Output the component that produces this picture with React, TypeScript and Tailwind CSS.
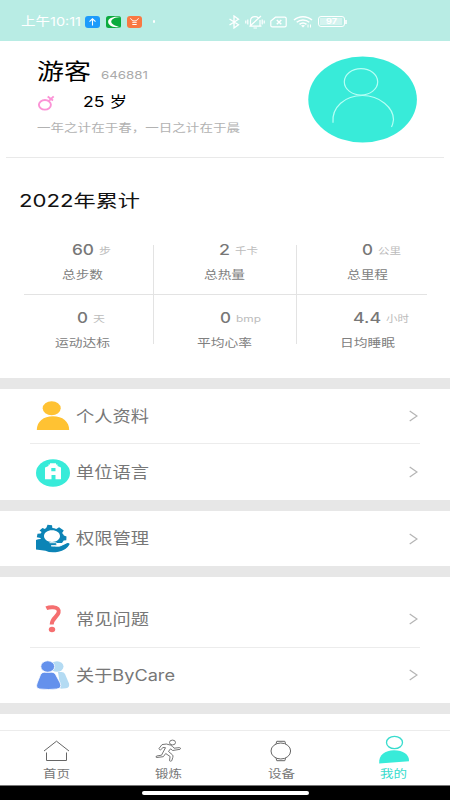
import { useLayoutEffect, useRef, useState, type ReactNode } from "react";

/* Text stretched horizontally to the width of its box. */
function Fit({ className, children }: { className: string; children: string }) {
  const box = useRef<HTMLSpanElement>(null);
  const inner = useRef<HTMLSpanElement>(null);
  const [scale, setScale] = useState(1);
  useLayoutEffect(() => {
    if (box.current && inner.current && inner.current.offsetWidth) {
      const natural = inner.current.getBoundingClientRect().width / scale;
      setScale(box.current.getBoundingClientRect().width / natural);
    }
    // eslint-disable-next-line
  }, [children]);
  return (
    <span ref={box} className={`block shrink-0 whitespace-nowrap leading-none ${className}`}>
      <span ref={inner} className="inline-block origin-left" style={{ transform: `scaleX(${scale})` }}>
        {children}
      </span>
    </span>
  );
}

function StatusBar() {
  return (
    <header className="flex h-[41px] shrink-0 items-center bg-[#b8ece4] pl-[21px] pt-[2px] text-white">
      <Fit className="w-[60px] text-[12px]">上午10:11</Fit>
      <svg className="ml-[3.5px] h-3 w-[15px]" viewBox="0 0 15 12">
        <rect width="15" height="12" rx="3" fill="#1d9bfb" />
        <path d="M7.5 9.5V3M4.5 5.6 7.5 2.8l3 2.8" fill="none" stroke="#fff" strokeWidth="1.1" />
      </svg>
      <svg className="ml-[6px] h-3 w-[15px]" viewBox="0 0 15 12">
        <rect width="15" height="12" rx="2.5" fill="#0cab3e" />
        <path d="M14.500 1C6-.3 1.500 3 2.200 6.400 3 10 8 11.700 14.500 11.200 8 9.700 4.800 7.700 5.300 5.200 6 2.800 9 1.300 14.500 1Z" fill="#fff" />
      </svg>
      <svg className="ml-[6px] h-3 w-[15px]" viewBox="0 0 15 12">
        <rect width="15" height="12" rx="3" fill="#f97842" />
        <path d="M3.500 2.300C5 5.700 10 5.700 11.500 2.300M5.300 6.300h4.400M5.300 8.500h4.400" fill="none" stroke="#fff" strokeWidth="1" />
      </svg>
      <span className="ml-[11px] size-[2.5px] rounded-full bg-white" />
      <svg className="ml-[72.500px] h-[14px] w-[12px]" viewBox="0 0 12 14" fill="none" stroke="#fff" strokeWidth="1.3">
        <path d="M1.500 4 10.500 9.800 6 13V1l4.500 3.200L1.500 10" />
      </svg>
      <svg className="ml-[5px] h-[14px] w-[20px]" viewBox="0 0 20 14" fill="none" stroke="#fff" strokeWidth="1.2">
        <path d="M4.500 11.100h12M5.500 10.500V6c0-2.700 1.800-4.300 4.500-4.300 1.500 0 2.600.4 3.300 1.200M15 5v5.500M8.500 13h3.500M16 1 4.500 11.500M2.800 4.500v5M.8 5.500v3M17.200 4.500v5M19.200 5.500v3" />
      </svg>
      <svg className="ml-[5.500px] h-[12px] w-[17px]" viewBox="0 0 17 12" fill="none" stroke="#fff" strokeWidth="1.200">
        <path d="M5.500 1.200h9.300q1.400 0 1.400 1.400v6.800q0 1.400-1.400 1.400H2.200Q.8 10.800.8 9.400V5Z" />
        <path d="m6.800 4 4.500 4.200M11.300 4 6.800 8.200" strokeWidth="1.500" />
      </svg>
      <svg className="ml-[5.500px] h-[13px] w-[20px]" viewBox="0 0 20 13" fill="none" stroke="#fff" strokeWidth="1.500">
        <path d="M1 5C6 .5 14 .5 19 5M3.700 7.300c3.500-3.100 9-3.100 12.600 0M6.500 9.400c2-1.700 5-1.700 7 0" />
        <path d="m10 12.500-2-2q2-1 4 0Z" fill="#fff" stroke="none" />
        <path d="M15 9.500v3m2.500-3v3" strokeWidth="1" />
      </svg>
      <div className="ml-[5px] flex h-[11px] w-[27px] items-center justify-center rounded-[3px] border border-white">
        <div className="flex h-[7px] w-[22px] items-center justify-center bg-white/40">
          <Fit className="w-[11px] text-[7px] font-bold">97</Fit>
        </div>
      </div>
      <span className="h-[4px] w-[2px] bg-white/80" />
    </header>
  );
}

function Profile() {
  return (
    <section className="flex h-[116px] shrink-0 pl-[37px]">
      <div className="w-[271px] pt-[19px]">
        <div className="flex items-end">
          <Fit className="w-[54px] text-[22px] text-black">游客</Fit>
          <Fit className="mb-[1px] ml-[10px] w-[47px] text-[11px] text-[#aaa]">646881</Fit>
        </div>
        <div className="mt-[12px] flex items-center">
          <svg className="h-[17px] w-[18px]" viewBox="0 0 18 17" fill="none" stroke="#fb93d6">
            <ellipse cx="7.900" cy="10.800" rx="6" ry="4.800" strokeWidth="1.900" />
            <path d="M11.500 7.200 16.700 2.400M10.700 2.600l5.300 4" strokeWidth="1.900" />
          </svg>
          <Fit className="ml-[28px] w-[44px] text-[14.5px] text-black">25 岁</Fit>
        </div>
        <Fit className="mt-[11.500px] w-[203px] text-[11px] text-[#b2b2b2]">一年之计在于春，一日之计在于晨</Fit>
      </div>
      <svg className="mt-[15px] h-[87px] w-[109px]" viewBox="0 0 109 87" fill="none">
        <ellipse cx="54.600" cy="43.500" rx="54.300" ry="43" fill="#38ebd9" />
        <g stroke="#b5fff5" strokeWidth="1.200">
          <ellipse cx="53" cy="25.800" rx="16.700" ry="13.200" />
          <path d="M25 66.700C23.500 51 37 39.500 54.500 39.500S85.500 52 85.500 63.500Q85 68 83.500 71" />
        </g>
      </svg>
    </section>
  );
}

function Stat({ shift, value, label }: { shift: string; value: ReactNode; label: ReactNode }) {
  return (
    <div className="flex flex-col items-center">
      <div className={`flex h-[11px] items-center gap-[5px] text-[#bcbcbc] ${shift}`}>{value}</div>
      <div className="mt-[14px] text-[11.5px] text-[#808080]">{label}</div>
    </div>
  );
}

const Num = ({ w, children }: { w: string; children: string }) => (
  <Fit className={`text-[14.5px] font-medium text-[#777] ${w}`}>{children}</Fit>
);
const Unit = ({ w, children }: { w: string; children: string }) => (
  <Fit className={`text-[9px] ${w}`}>{children}</Fit>
);

function Totals() {
  return (
    <section className="flex h-[220px] shrink-0 flex-col pt-[34px]">
      <Fit className="ml-[19px] w-[121px] text-[17.5px] text-[#111]">2022年累计</Fit>
      <div className="ml-[12px] mt-[35.5px] w-[427px]">
        <div className="grid h-[49px] grid-cols-3 divide-x divide-[#e3e3e3]">
          <Stat shift="pl-[17px]" value={<><Num w="w-[22px]">60</Num><Unit w="w-[12px]">步</Unit></>} label={<Fit className="w-[41px]">总步数</Fit>} />
          <Stat shift="pl-[28px]" value={<><Num w="w-[11px]">2</Num><Unit w="w-[23px]">千卡</Unit></>} label={<Fit className="w-[41px]">总热量</Fit>} />
          <Stat shift="pl-[28px]" value={<><Num w="w-[11px]">0</Num><Unit w="w-[23px]">公里</Unit></>} label={<Fit className="w-[41px]">总里程</Fit>} />
        </div>
        <div className="mx-[12px] h-px bg-[#e3e3e3]" />
        <div className="grid h-[49px] grid-cols-3 grid-rows-[49px] divide-x divide-[#e3e3e3]">
          <div className="pt-[18px]">
            <Stat shift="pl-[17px]" value={<><Num w="w-[11px]">0</Num><Unit w="w-[12px]">天</Unit></>} label={<Fit className="w-[55px]">运动达标</Fit>} />
          </div>
          <div className="pt-[18px]">
            <Stat shift="pl-[31px]" value={<><Num w="w-[11px]">0</Num><Unit w="w-[25px]">bmp</Unit></>} label={<Fit className="w-[55px]">平均心率</Fit>} />
          </div>
          <div className="pt-[18px]">
            <Stat shift="pl-[26px]" value={<><Num w="w-[28px]">4.4</Num><Unit w="w-[23px]">小时</Unit></>} label={<Fit className="w-[55px]">日均睡眠</Fit>} />
          </div>
        </div>
      </div>
    </section>
  );
}

function Row({ icon, label, className }: { icon: ReactNode; label: ReactNode; className: string }) {
  return (
    <div className={`flex shrink-0 items-center pl-[36px] pr-[32px] ${className}`}>
      {icon}
      <div className="ml-[6px] flex-1 pt-px text-[15.5px] text-[#777]">{label}</div>
      <svg className="h-[12px] w-[9px]" viewBox="0 0 9 12" fill="none" stroke="#b5b5b5" strokeWidth="1.300">
        <path d="m.7 1 7.300 5-7.300 5" />
      </svg>
    </div>
  );
}

const Divider = () => <div className="ml-[30px] mr-[30px] h-px shrink-0 bg-[#ececec]" />;

const PersonIcon = () => (
  <svg className="h-[30px] w-[34px]" viewBox="0 0 34 30" fill="#ffc233">
    <ellipse cx="15.700" cy="7.200" rx="9" ry="7" />
    <path d="M.8 29C.8 20.500 7.500 15.300 17 15.300S33.200 20.500 33.200 29Z" />
  </svg>
);
const UnitIcon = () => (
  <svg className="h-[30px] w-[34px]" viewBox="0 0 34 30">
    <ellipse cx="17" cy="16" rx="17" ry="13.700" fill="#38ebd9" />
    <path fillRule="evenodd" d="M9 22.300V10.500l3.500-1.500V7.500H14V6.300h6v1.200h1.500V9l3.500 1.500v11.800h-5.500v-4.300h-4v4.300ZM15.300 11v3.300h4.200V11Z" fill="#fff" />
  </svg>
);
const GearHandIcon = () => (
  <svg className="h-[30px] w-[34px]" viewBox="0 0 34 30" fill="#0c84b6">
    <path fillRule="evenodd" d="M10.500 3.500 11.500.800l4.500.5.400 2.700q2 .2 3.800 1l2.900-1.700 4.700 3.200-1.700 2.500q1.300 1.200 1.800 2.600l2.600.8-.2 3.800-2.600.2-1.700 2.600H6L4.500 14l-3.700-.7.700-3.600 3.200-.1.900-1.600L3.500 6.500 6.500 4l2.400 1ZM16 6.200c-4.600 0-8 2.600-8 5.900s3.400 5.900 8 5.900 8-2.600 8-5.900-3.400-5.900-8-5.900Z" />
    <path d="M0 16q5-2 9 .5l4.500 2.200h5q2.500 0 2.500 1.500T18 22l5.500.2 8-3.200q2.500-.3 2 1.500-3.500 6-11 7.300-8 1.500-13-1L0 25.500Z" />
    <path d="M13.500 18.700h6q2.200.3 1.700 1.900-1 1.200-6 1.200 7 1 9.500-.1l5-2.500" fill="none" stroke="#fff" strokeWidth=".9" />
  </svg>
);
const QuestionIcon = () => (
  <svg className="h-[30px] w-[34px]" viewBox="0 0 34 30" fill="none">
    <path d="M10.300 4.300Q13 3 17 3.200C21.500 3.400 23.300 5.500 22.600 8.500 21.800 12.500 16 14 15.700 20.500" stroke="#f56f70" strokeWidth="4" />
    <ellipse cx="16" cy="25.500" rx="3.200" ry="2.700" fill="#f56f70" />
  </svg>
);
const PeopleIcon = () => (
  <svg className="h-[30px] w-[34px]" viewBox="0 0 34 30">
    <g fill="#b4dbf3">
      <ellipse cx="21" cy="6.500" rx="6.500" ry="5.200" />
      <path d="M22 12h3.500q2.500 0 3.500 2l4 9.500q1 4-3 4.800l-5.500.4Z" />
    </g>
    <g fill="#6491ec" stroke="#fff" strokeWidth=".8">
      <path d="M8 12.200h8q2.500 0 3.700 2.500l4.500 8.300q2 5.500-3.500 6-8 1-17 0-4.500-.7-2.500-6L4.500 14.700q1.200-2.500 3.500-2.500Z" />
      <ellipse cx="11.700" cy="6.500" rx="6.900" ry="5.700" />
    </g>
  </svg>
);

function Tab({ icon, label, active }: { icon: ReactNode; label: string; active?: boolean }) {
  return (
    <div className={`flex flex-1 flex-col items-center ${active ? "text-[#38dccd]" : "text-[#777]"}`}>
      <div className="flex h-[37px] items-end">{icon}</div>
      <Fit className="w-[27px] pt-px text-[11.5px]">{label}</Fit>
    </div>
  );
}

export default function App() {
  return (
    <div className="flex h-[800px] w-[450px] flex-col overflow-hidden bg-white font-[Inter,'Noto_Sans_CJK_SC',sans-serif]">
      <StatusBar />
      <Profile />
      <div className="mx-[6px] h-px shrink-0 bg-[#e9e9e9]" />
      <Totals />
      <div className="h-[11px] shrink-0 bg-[#e7e7e7]" />
      <Row className="h-[54px]" icon={<PersonIcon />} label={<Fit className="w-[73px]">个人资料</Fit>} />
      <Divider />
      <Row className="h-[56px]" icon={<UnitIcon />} label={<Fit className="w-[73px]">单位语言</Fit>} />
      <div className="h-[11px] shrink-0 bg-[#e7e7e7]" />
      <Row className="h-[55px]" icon={<GearHandIcon />} label={<Fit className="w-[73px]">权限管理</Fit>} />
      <div className="h-[11px] shrink-0 bg-[#e7e7e7]" />
      <Row className="h-[70px] pt-[14px]" icon={<QuestionIcon />} label={<Fit className="w-[73px]">常见问题</Fit>} />
      <Divider />
      <Row className="h-[55px] pb-px" icon={<PeopleIcon />} label={<Fit className="w-[99px]">关于ByCare</Fit>} />
      <div className="h-[11px] shrink-0 bg-[#e7e7e7]" />
      <div className="h-[16px] shrink-0" />
      <nav className="flex h-[55px] shrink-0 border-t border-[#ececec]">
        <Tab
          label="首页"
          icon={
            <svg className="mb-[6px] h-[22px] w-[27px]" viewBox="0 0 27 22" fill="none" stroke="#666" strokeWidth="1">
              <path d="M1 11 13.500 1.200 26 11M3.500 12.500v8h20v-8" />
            </svg>
          }
        />
        <Tab
          label="锻炼"
          icon={
            <svg className="mb-[6px] h-[23px] w-[27px]" viewBox="0 0 27 23" fill="none" stroke="#666" strokeWidth=".9" strokeLinejoin="round">
              <ellipse cx="17.500" cy="3.500" rx="3" ry="2.400" />
              <path d="M4 9.500 7 5.600q4.500-1.400 8.500.5 2.500 1.200 3.500 3.100l5.500-.6q2 .5.500 1.700l-7.300 1.200-2.200-1.700-2 2.700 3.800 3.200q1.200 1 .5 2.700l-1 3.300q-1.200 1-2.300 0l.6-4.200-4.400-3-2.400 3.200-6.500.8Q.300 18.500 1.500 17l5-.8 4-7.500-2.500-.2-2.300 2.300Q4.200 11 4 9.500Z" />
            </svg>
          }
        />
        <Tab
          label="设备"
          icon={
            <svg className="mb-[6px] h-[22px] w-[22px]" viewBox="0 0 22 22" fill="none" stroke="#666" strokeWidth="1">
              <ellipse cx="10.800" cy="11" rx="9.800" ry="8" />
              <path d="m6 3.800.8-2.500h8l.8 2.500M6 18.200l.8 2.500h8l.8-2.500" />
            </svg>
          }
        />
        <Tab
          active
          label="我的"
          icon={
            <svg className="mb-[4px] h-[29px] w-[32px]" viewBox="0 0 32 29">
              <ellipse cx="16.500" cy="7.500" rx="8" ry="6.200" fill="none" stroke="#38dccd" strokeWidth="1.300" />
              <path d="M1.200 28.400C.5 20 7 15.200 16 15.200s15.500 4.300 15 11Z" fill="#38ebd9" />
            </svg>
          }
        />
      </nav>
      <footer className="flex h-[15px] shrink-0 justify-center border-t border-[#777] bg-black pt-[5px]">
        <div className="h-[4px] w-[167px] rounded-full bg-white" />
      </footer>
    </div>
  );
}
